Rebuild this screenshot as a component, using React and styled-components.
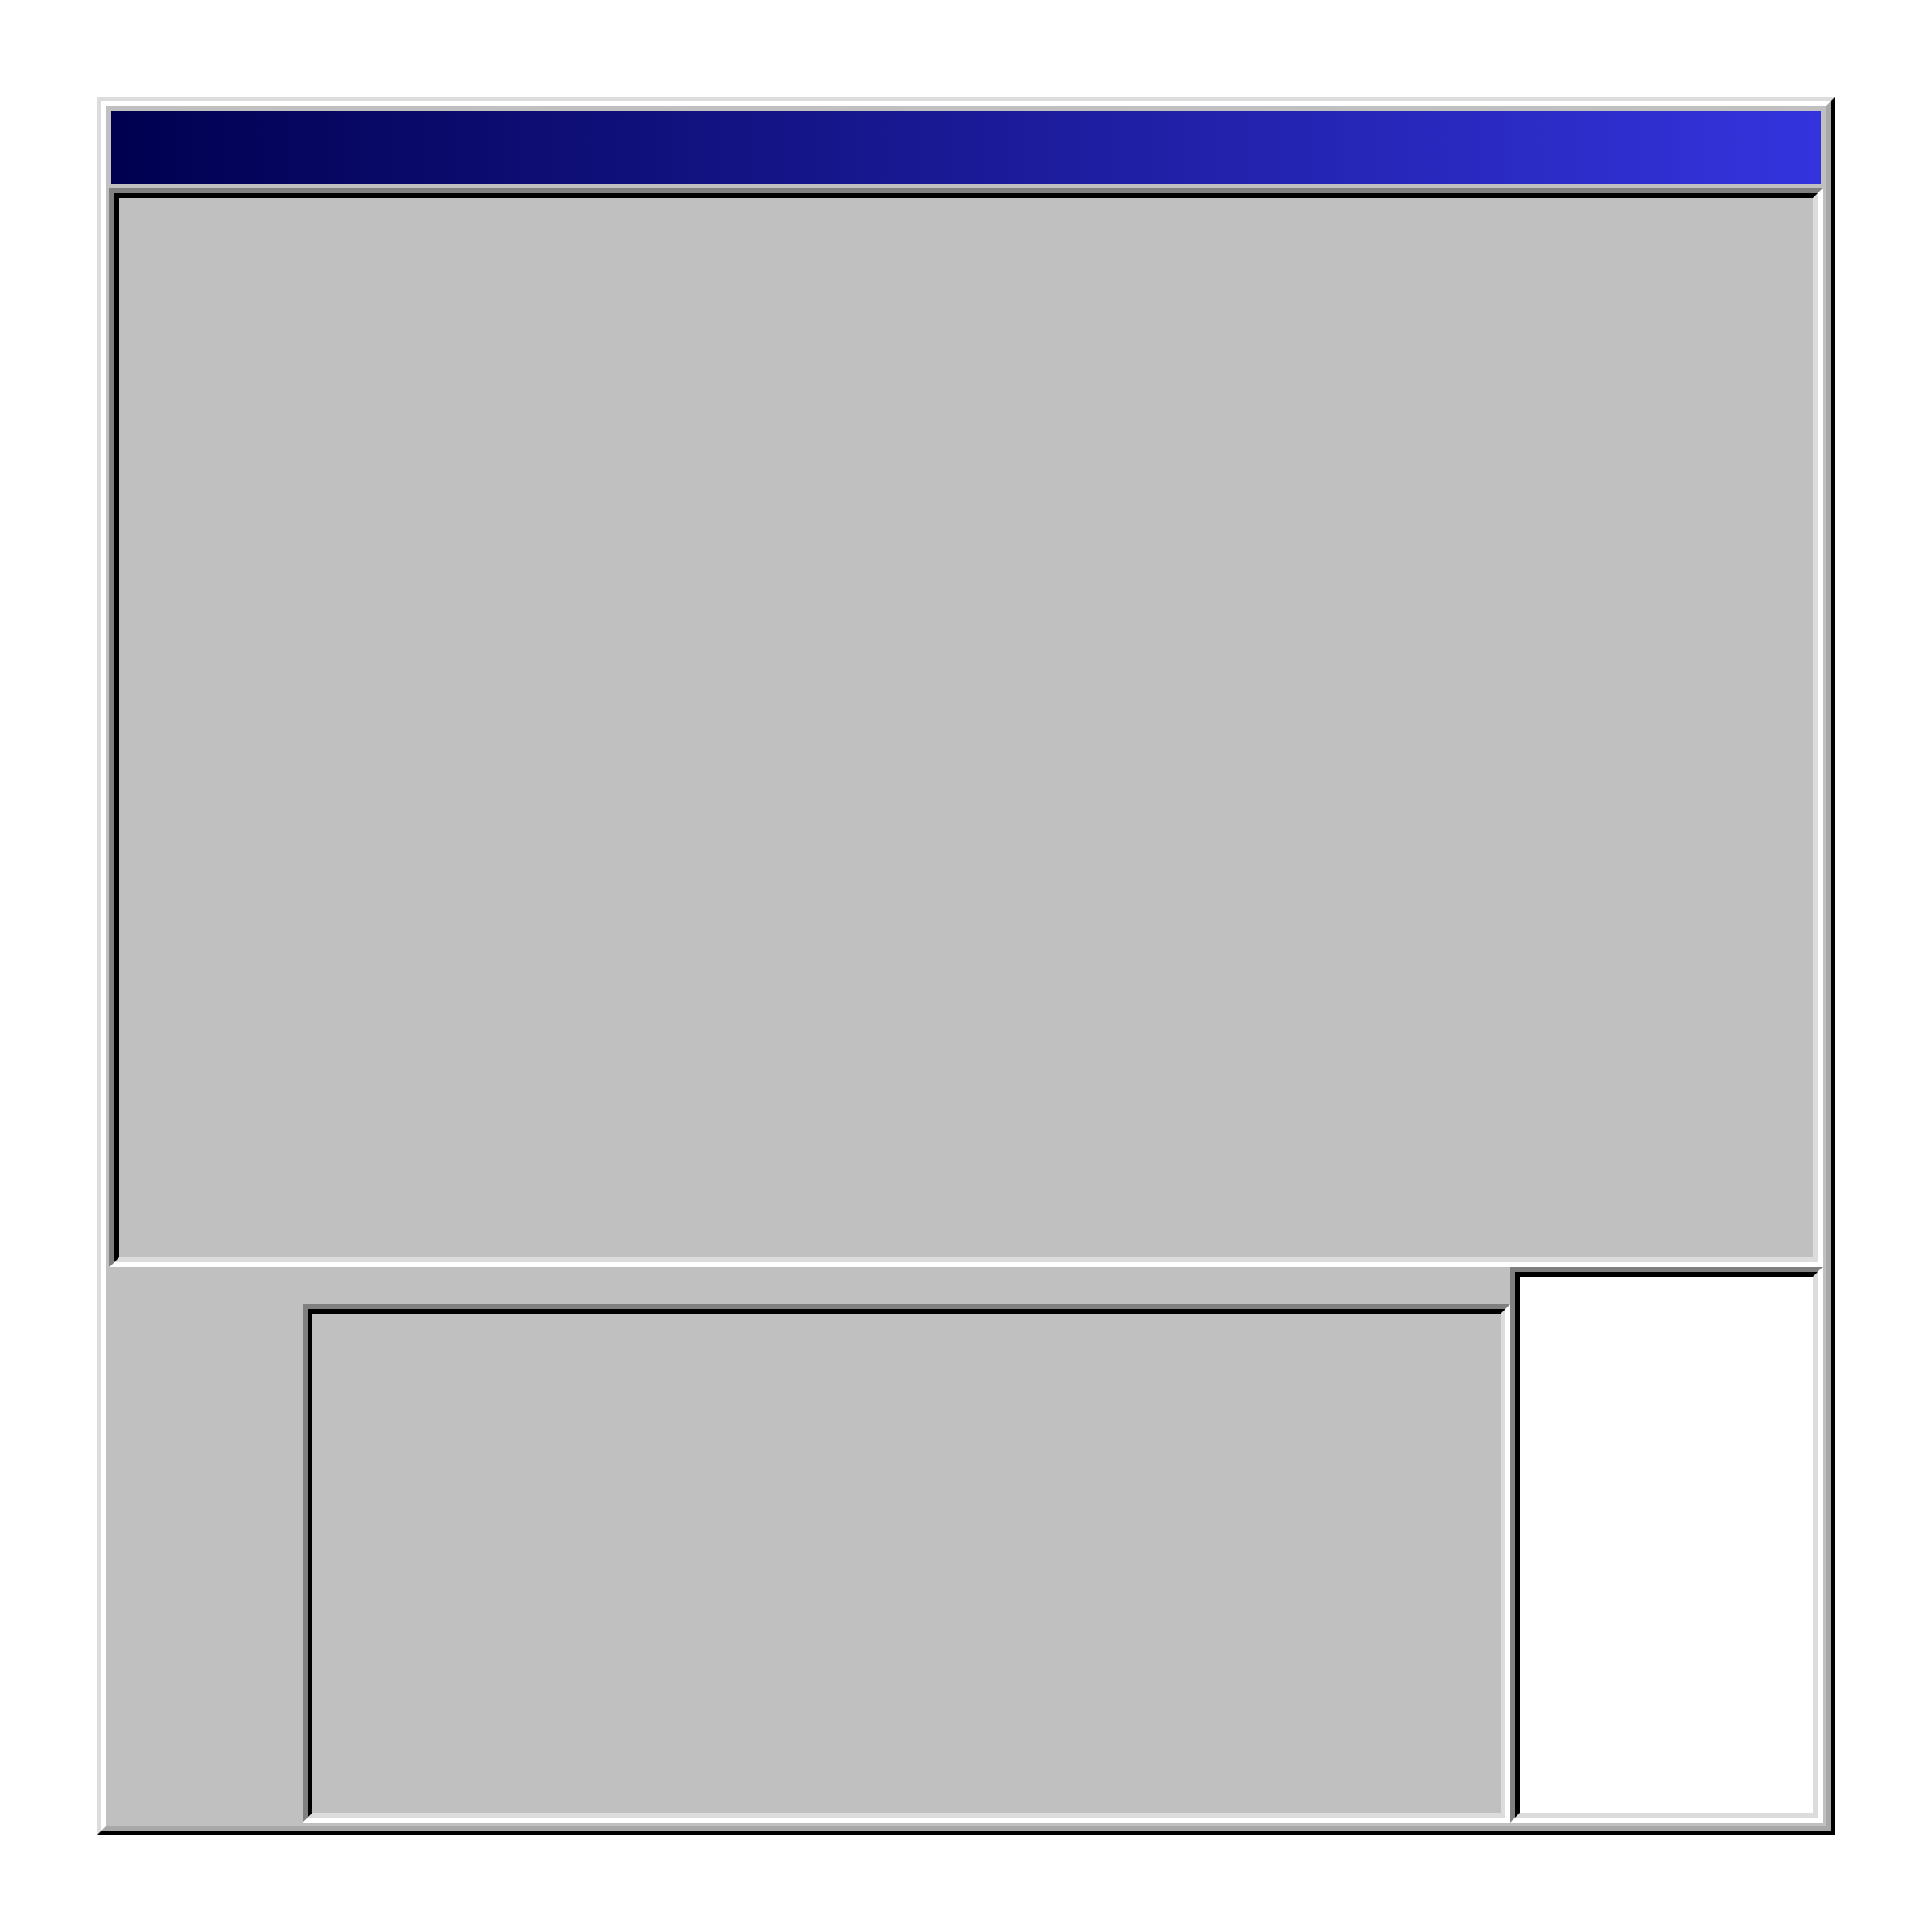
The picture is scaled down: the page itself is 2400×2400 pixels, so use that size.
import React from "react";
import styled, { createGlobalStyle } from "styled-components";

const Global = createGlobalStyle`
  html, body { margin: 0; padding: 0; background: #ffffff; }
  body { font-family: "Liberation Sans", Arial, sans-serif; }
  * { box-sizing: border-box; }
`;

const Page = styled.div`
  padding: 120px;
  width: 2400px;
  height: 2400px;
`;

const WindowOuter = styled.div`
  width: 2160px;
  height: 2160px;
  border: 6px solid;
  border-color: #dcdcdc #000000 #000000 #dcdcdc;
`;

const WindowInner = styled.div`
  width: 100%;
  height: 100%;
  border: 6px solid;
  border-color: #ffffff #a8a8a8 #a8a8a8 #ffffff;
  background: #c0c0c0;
  padding: 4px;
  display: flex;
  flex-direction: column;
`;

const TitleBar = styled.div`
  height: 90px;
  margin: 2px 2px 6px;
  background: linear-gradient(to right, #000050, #3434de);
  flex: none;
`;

const SunkenOuter = styled.div`
  border: 6px solid;
  border-color: #808080 #ffffff #ffffff #808080;
  width: ${(p) => (p.$width ? `${p.$width}px` : "auto")};
  height: ${(p) => p.$height}px;
  flex: ${(p) => (p.$grow ? "1 1 auto" : "none")};
`;

const SunkenInner = styled.div`
  width: 100%;
  height: 100%;
  border: 6px solid;
  border-color: #000000 #dcdcdc #dcdcdc #000000;
  background: ${(p) => p.$bg || "#c0c0c0"};
`;

const BottomRow = styled.div`
  display: flex;
  align-items: flex-end;
  height: 690px;
  flex: none;
`;

const Spacer = styled.div`
  width: 240px;
  flex: none;
`;

function Sunken({ width, height, grow, bg }) {
  return (
    <SunkenOuter $width={width} $height={height} $grow={grow}>
      <SunkenInner $bg={bg} />
    </SunkenOuter>
  );
}

export default function App() {
  return (
    <>
      <Global />
      <Page>
        <WindowOuter>
          <WindowInner>
            <TitleBar />
            <Sunken height={1340} />
            <BottomRow>
              <Spacer />
              <Sunken width={1500} height={644} />
              <Sunken grow height={690} bg="#ffffff" />
            </BottomRow>
          </WindowInner>
        </WindowOuter>
      </Page>
    </>
  );
}
